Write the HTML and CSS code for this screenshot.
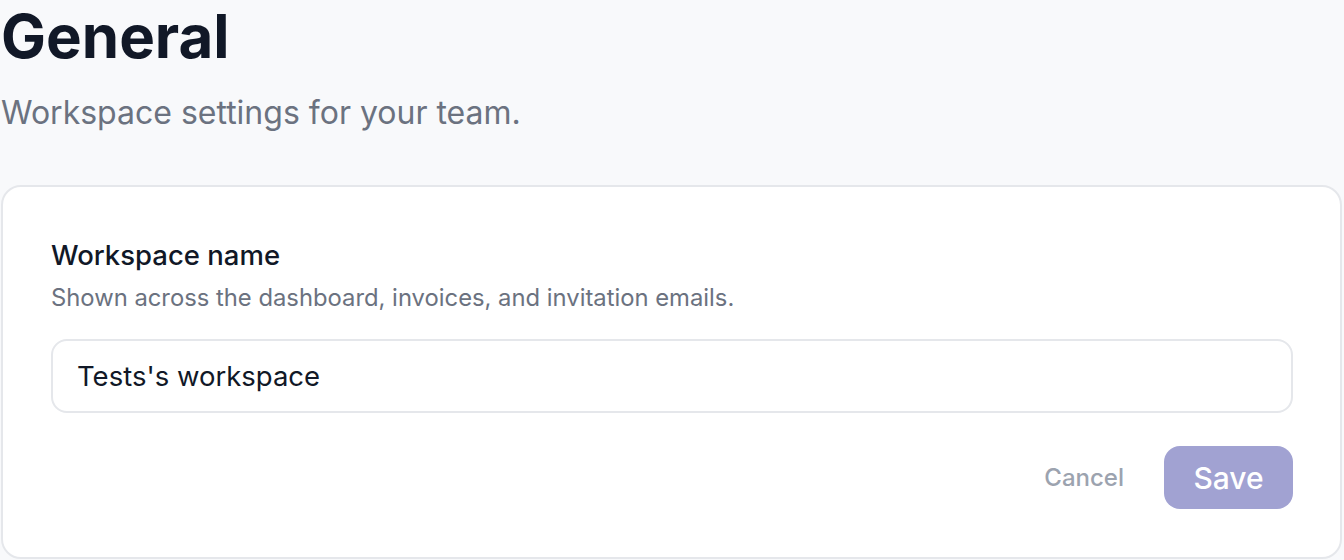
FILE: index.html
```html
<!doctype html>
<html>
  <head>
    <meta charset="utf-8">
    <title>General settings</title>
    <meta name="viewport" content="width=device-width, initial-scale=1">
    <link rel="stylesheet" href="styles.css">
  </head>
  <body>
    <main>
      <header class="page-head">
        <h1>General</h1>
        <p class="subtitle">Workspace settings for your team.</p>
      </header>

      <section class="card">
        <form class="field" onsubmit="return false">
          <label for="ws-name" class="label">Workspace name</label>
          <p class="hint">Shown across the dashboard, invoices, and invitation emails.</p>
          <input id="ws-name" class="text-input" type="text" value="Tests's workspace">

          <div class="actions">
            <button type="button" class="btn-cancel">Cancel</button>
            <button type="submit" class="btn-save" disabled>Save</button>
          </div>
        </form>
      </section>
    </main>
  </body>
</html>
```

FILE: styles.css
```css
body {
  margin: 0;
  padding: 0;
  background-color: #f8f9fb;
  font-family: Inter, "Noto Sans", sans-serif;
  color: #111827;
}
main {
  padding: 0 2px 0 1px;
}
.page-head {
  padding-bottom: 48px;
}
h1 {
  margin: 0;
  font-size: 60px;
  line-height: 72px;
  font-weight: 700;
  color: #111827;
}
.subtitle {
  margin: 0;
  padding-top: 17px;
  font-size: 32px;
  line-height: 48px;
  color: #6b7280;
}
.card {
  background-color: #fff;
  border: 2px solid #e5e7eb;
  border-radius: 20px;
  padding: 50px 47px 48px 48px;
}
.field {
  display: flex;
  flex-direction: column;
  margin: 0;
}
.label {
  font-size: 27.5px;
  line-height: 36px;
  font-weight: 500;
  color: #111827;
}
.hint {
  margin: 9px 0 0 0;
  font-size: 23.8px;
  line-height: 32px;
  color: #6b7280;
}
.text-input {
  margin-top: 25px;
  height: 74px;
  box-sizing: border-box;
  padding: 0 24px;
  border: 2px solid #e5e7eb;
  border-radius: 16px;
  font-family: inherit;
  font-size: 27.5px;
  color: #111827;
  background-color: #fff;
}
.actions {
  display: flex;
  justify-content: flex-end;
  align-items: center;
  gap: 40px;
  margin-top: 33px;
}
.btn-cancel {
  border: 0;
  background: none;
  padding: 0;
  font-family: inherit;
  font-size: 24px;
  font-weight: 500;
  color: #9ca3af;
  cursor: pointer;
}
.btn-save {
  border: 0;
  border-radius: 16px;
  height: 63px;
  width: 129px;
  background-color: #a1a2d2;
  font-family: inherit;
  font-size: 30px;
  font-weight: 500;
  color: #fff;
}
```
